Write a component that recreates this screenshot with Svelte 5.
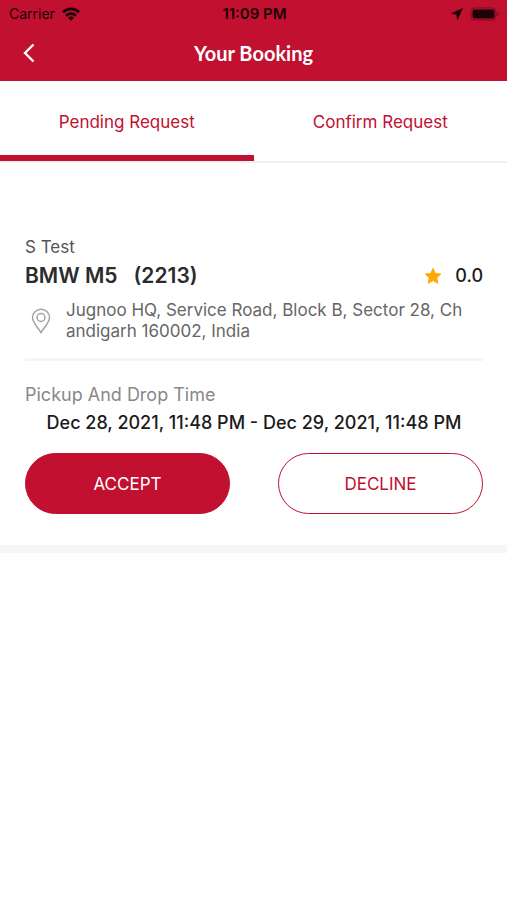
<script lang="ts">
  type Booking = {
    customer: string;
    car: string;
    plate: string;
    rating: number;
    address: string[];
    pickup: string;
    drop: string;
  };

  const tabs = ["Pending Request", "Confirm Request"];
  let activeTab = 0;

  const bookings: Booking[] = [
    {
      customer: "S Test",
      car: "BMW M5",
      plate: "2213",
      rating: 0,
      address: [
        "Jugnoo HQ, Service Road, Block B, Sector 28, Ch",
        "andigarh 160002, India",
      ],
      pickup: "Dec 28, 2021, 11:48 PM",
      drop: "Dec 29, 2021, 11:48 PM",
    },
  ];
</script>

<header class="top">
  <div class="status">
    <div class="carrier">
      <span>Carrier</span>
      <svg width="18" height="14" viewBox="0 0 18 14" aria-hidden="true">
        <g fill="none" stroke="currentColor" stroke-width="2.8">
          <path d="M1 5.2a11.5 11.5 0 0 1 16 0" />
          <path d="M4 8.7a7.2 7.2 0 0 1 10 0" />
        </g>
        <path d="M9 13.8 6 10.8a4.4 4.4 0 0 1 6 0z" fill="currentColor" />
      </svg>
    </div>
    <span class="clock">11:09 PM</span>
    <div class="power">
      <svg width="12" height="12" viewBox="0 0 12 12" aria-hidden="true">
        <path d="M11.5.5.5 5.4l5 1.1 1.1 5z" fill="currentColor" stroke="currentColor" stroke-width="0.6" stroke-linejoin="round" />
      </svg>
      <svg width="30" height="14" viewBox="0 0 30 14" aria-hidden="true">
        <rect x="1" y="1" width="25" height="12" rx="3.5" fill="none" stroke="currentColor" opacity="0.4" />
        <rect x="2.5" y="2.5" width="22" height="9" rx="2" fill="currentColor" />
        <path d="M27.5 4.8c2 .7 2 3.7 0 4.4z" fill="currentColor" opacity="0.4" />
      </svg>
    </div>
  </div>
  <div class="nav">
    <button class="back" aria-label="Back">
      <svg width="12" height="20" viewBox="0 0 12 20" aria-hidden="true">
        <path d="M10.5 1.5 2 10l8.5 8.5" fill="none" stroke="currentColor" stroke-width="2.4" />
      </svg>
    </button>
    <h1>Your Booking</h1>
  </div>
</header>

<nav class="tabs">
  {#each tabs as tab, i}
    <button class="tab" class:active={activeTab === i} on:click={() => (activeTab = i)}>
      {tab}
    </button>
  {/each}
</nav>

<main>
  {#each bookings as booking}
    <article class="booking">
      <p class="customer">{booking.customer}</p>
      <div class="car-row">
        <h2><span>{booking.car}</span><span>({booking.plate})</span></h2>
        <div class="rating">
          <svg width="18" height="18" viewBox="0 0 18 18" aria-hidden="true">
            <path
              d="m9 1.5 2.3 5 5.4.6-4 3.7 1.1 5.4L9 13.5l-4.8 2.7 1.1-5.4-4-3.7 5.4-.6z"
              fill="#ffa800"
              stroke="#ffa800"
              stroke-linejoin="round"
            />
          </svg>
          <span>{booking.rating.toFixed(1)}</span>
        </div>
      </div>
      <div class="address">
        <svg width="20" height="26" viewBox="0 0 20 26" aria-hidden="true">
          <g fill="none" stroke="#a3a3a3" stroke-width="1.5">
            <path d="M10 24.5C7.5 20.5 1.5 14.5 1.5 9.5a8.5 8.2 0 0 1 17 0c0 5-6 11-8.5 15z" />
            <circle cx="10" cy="9.5" r="4" />
          </g>
        </svg>
        <p>
          {#each booking.address as line}
            <span>{line}</span>
          {/each}
        </p>
      </div>
      <div class="times">
        <p class="label">Pickup And Drop Time</p>
        <p class="range">{booking.pickup} - {booking.drop}</p>
      </div>
      <div class="actions">
        <button class="accept">ACCEPT</button>
        <button class="decline">DECLINE</button>
      </div>
    </article>
  {/each}
</main>

<style>
  :global(body) {
    margin: 0;
    background: #fff;
    font-family: Inter, "Noto Sans", sans-serif;
  }
  h1,
  h2,
  p {
    margin: 0;
  }
  svg {
    display: block;
    flex: none;
  }
  button {
    border: none;
    background: none;
    padding: 0;
    font: inherit;
    cursor: pointer;
  }
  .top {
    background: #c11030;
    color: #fff;
  }
  .status {
    display: grid;
    grid-template-columns: 1fr auto 1fr;
    align-items: center;
    height: 27px;
    padding: 0 7px 0 9px;
    color: #1c0307;
    font-size: 14px;
  }
  .carrier,
  .power {
    display: flex;
    align-items: center;
    gap: 7px;
  }
  .power {
    justify-content: flex-end;
  }
  .clock {
    font-size: 15px;
    font-weight: 600;
  }
  .nav {
    display: grid;
    grid-template-columns: 58px 1fr 58px;
    align-items: center;
    height: 52px;
    padding-bottom: 2px;
  }
  .back {
    display: flex;
    justify-content: center;
    color: #fff;
  }
  h1 {
    grid-column: 2;
    font-family: Lato, sans-serif;
    font-size: 20px;
    font-weight: 700;
    text-align: center;
  }
  .tabs {
    display: grid;
    grid-template-columns: 1fr 1fr;
    border-bottom: 2px solid #f0f0f0;
  }
  .tab {
    height: 80px;
    border-top: 8px solid transparent;
    border-bottom: 6px solid transparent;
    color: #c11030;
    font-size: 17px;
  }
  .tab.active {
    border-bottom-color: #c11030;
  }
  .booking {
    padding: 72px 24px 31px 25px;
    border-bottom: 8px solid #f4f6f7;
  }
  .customer {
    color: #555;
    font-size: 17px;
    line-height: 24px;
  }
  .car-row {
    display: flex;
    justify-content: space-between;
    align-items: center;
    line-height: 34px;
  }
  h2 {
    display: flex;
    gap: 16px;
    color: #2b2b2b;
    font-size: 21px;
    font-weight: 600;
  }
  .rating {
    display: flex;
    align-items: center;
    gap: 13px;
    color: #1b1b1b;
    font-size: 18px;
    font-weight: 500;
  }
  .address {
    display: flex;
    align-items: center;
    gap: 15px;
    padding: 7px 0 16px 6px;
    border-bottom: 3px solid #f5f5f5;
    color: #666;
    font-size: 17px;
    line-height: 21px;
  }
  .address span {
    display: block;
  }
  .times {
    padding: 20px 0 16px;
    font-size: 18px;
    line-height: 28px;
  }
  .label {
    color: #888;
  }
  .range {
    color: #1b1b1b;
    font-weight: 500;
    text-align: center;
  }
  .actions {
    display: grid;
    grid-template-columns: 1fr 1fr;
    gap: 48px;
  }
  .actions button {
    height: 61px;
    border: 1px solid #c11030;
    border-radius: 31px;
    font-size: 17px;
  }
  .accept {
    background: #c11030;
    color: #fff;
  }
  .decline {
    color: #c11030;
  }
</style>
